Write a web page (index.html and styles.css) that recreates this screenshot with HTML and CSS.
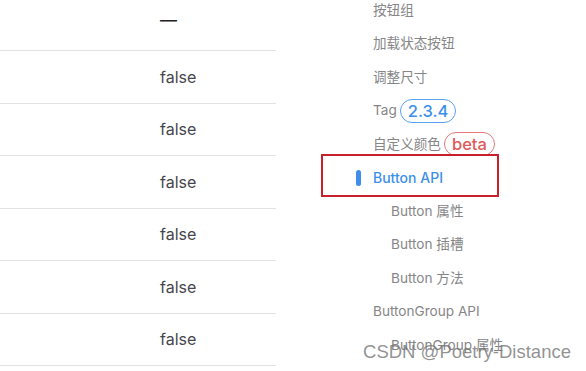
FILE: index.html
```html
<!DOCTYPE html>
<html lang="zh-CN">
<head>
    <meta charset="UTF-8">
    <title>Button API</title>
    <link rel="stylesheet" href="styles.css">
</head>
<body>
<div id="page">
    <div class="table">
        <div class="row"><span class="cell-key"></span><span class="cell-val dash">—</span></div>
        <div class="row"><span class="cell-key"></span><span class="cell-val">false</span></div>
        <div class="row"><span class="cell-key"></span><span class="cell-val">false</span></div>
        <div class="row"><span class="cell-key"></span><span class="cell-val">false</span></div>
        <div class="row"><span class="cell-key"></span><span class="cell-val">false</span></div>
        <div class="row"><span class="cell-key"></span><span class="cell-val">false</span></div>
        <div class="row"><span class="cell-key"></span><span class="cell-val">false</span></div>
    </div>
    <ul class="outline">
        <li>按钮组</li>
        <li>加载状态按钮</li>
        <li>调整尺寸</li>
        <li>Tag<span class="badge badge-info">2.3.4</span></li>
        <li>自定义颜色<span class="badge badge-danger">beta</span></li>
        <li class="active">Button API</li>
        <li class="sub">Button 属性</li>
        <li class="sub">Button 插槽</li>
        <li class="sub">Button 方法</li>
        <li>ButtonGroup API</li>
        <li class="sub">ButtonGroup 属性</li>
        <!-- 截图标注 -->
        <div class="mark"></div>
    </ul>
    <div class="watermark">CSDN @Poetry-Distance</div>
</div>
</body>
</html>
```

FILE: styles.css
```css
* {
    margin: 0;
    padding: 0;
}
html, body {
    background: #fff;
    overflow: hidden;
}
#page {
    width: 586px;
    height: 371px;
    display: flex;
    position: relative;
    overflow: hidden;
    font-family: Inter, "Noto Sans CJK SC", sans-serif;
}
.table {
    width: 276px;
    margin-top: -1.5px;
    flex-shrink: 0;
}
.row {
    height: 52.5px;
    box-sizing: border-box;
    border-bottom: 1px solid #e2e2e3;
    display: flex;
    align-items: center;
}
.cell-key {
    width: 160px;
}
.cell-val {
    font-size: 16px;
    color: #46464c;
}
.dash {
    color: #222;
    margin-top: -8px;
    font-size: 17px;
}
.outline {
    list-style: none;
    margin-left: 97px;
    margin-top: -6.5px;
    position: relative;
}
.outline li {
    height: 33.5px;
    line-height: 33.5px;
    font-size: 13.6px;
    color: #868688;
    white-space: nowrap;
    display: flex;
    align-items: center;
}
.outline .sub {
    padding-left: 18px;
}
.outline .active {
    color: #3d8fe8;
    font-weight: 500;
    font-size: 14px;
    position: relative;
}
.outline .active::before {
    content: "";
    position: absolute;
    left: -17px;
    top: 9px;
    width: 5px;
    height: 16px;
    border-radius: 3px;
    background: #3d8fe8;
}
.badge {
    display: inline-block;
    height: 22px;
    line-height: 22px;
    padding: 0 7px;
    margin-left: 3px;
    border: 1px solid;
    border-radius: 12px;
    font-size: 16.5px;
    font-weight: 500;
}
.badge-info {
    color: #3d8fe8;
    border-color: #5aa3ef;
}
.badge-danger {
    color: #e05a5a;
    border-color: #e87a7a;
}
.mark {
    position: absolute;
    left: -52px;
    top: 160.5px;
    width: 174px;
    height: 39px;
    border: 2px solid #c9212c;
}
.watermark {
    position: absolute;
    right: 15px;
    bottom: 8px;
    font-family: "Liberation Sans", Arial, sans-serif;
    font-size: 18.5px;
    color: rgba(110, 110, 110, 0.75);
    letter-spacing: 0;
}
```
